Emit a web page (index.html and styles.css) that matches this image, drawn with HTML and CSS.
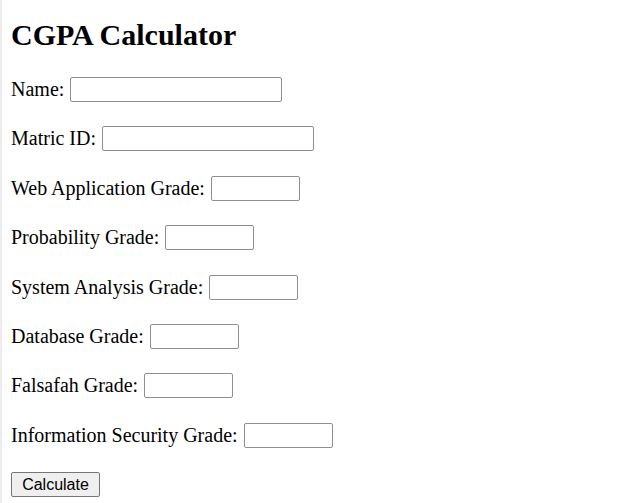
FILE: index.html
```html
<!DOCTYPE html>
<html>
<head>
<meta charset="utf-8">
<title>CGPA Calculator</title>
<link rel="stylesheet" href="styles.css">
</head>
<body>
<h1 class="title">CGPA Calculator</h1>
<form class="form">
  <div class="row"><label class="label">Name:</label><input class="field wide" type="text"></div>
  <div class="row"><label class="label">Matric ID:</label><input class="field wide" type="text"></div>
  <div class="row"><label class="label">Web Application Grade:</label><input class="field short" type="text"></div>
  <div class="row"><label class="label">Probability Grade:</label><input class="field short" type="text"></div>
  <div class="row"><label class="label">System Analysis Grade:</label><input class="field short" type="text"></div>
  <div class="row"><label class="label">Database Grade:</label><input class="field short" type="text"></div>
  <div class="row"><label class="label">Falsafah Grade:</label><input class="field short" type="text"></div>
  <div class="row"><label class="label">Information Security Grade:</label><input class="field short" type="text"></div>
  <div class="row"><button class="btn" type="button">Calculate</button></div>
</form>
</body>
</html>
```
FILE: styles.css
```css
html, body {
  margin: 0;
  padding: 0;
  background: #ffffff;
}
body {
  padding: 0 0 0 9px;
  font-family: "Liberation Serif", "Times New Roman", serif;
  color: #000;
  border-left: 2px solid #ececec;
  min-height: 503px;
  box-sizing: border-box;
}
.title {
  margin: 0;
  padding-top: 17px;
  font-size: 30px;
  font-weight: bold;
  line-height: 36px;
}
.form {
  display: flex;
  flex-direction: column;
  gap: 24.4px;
  margin-top: 24px;
}
.row {
  display: flex;
  align-items: center;
  height: 25px;
}
.label {
  font-size: 20px;
  margin-right: 6px;
}
.field {
  box-sizing: border-box;
  height: 25px;
  border: 1px solid #8f8f8f;
  border-radius: 2px;
  padding: 2px 4px;
  background: #fff;
}
.wide { width: 212px; }
.short { width: 89px; }
.btn {
  box-sizing: border-box;
  height: 25px;
  width: 89px;
  font-family: "Liberation Sans", Arial, sans-serif;
  font-size: 16px;
  background: #efefef;
  border: 1px solid #767676;
  border-radius: 2px;
  padding: 0;
  color: #000;
}
```
